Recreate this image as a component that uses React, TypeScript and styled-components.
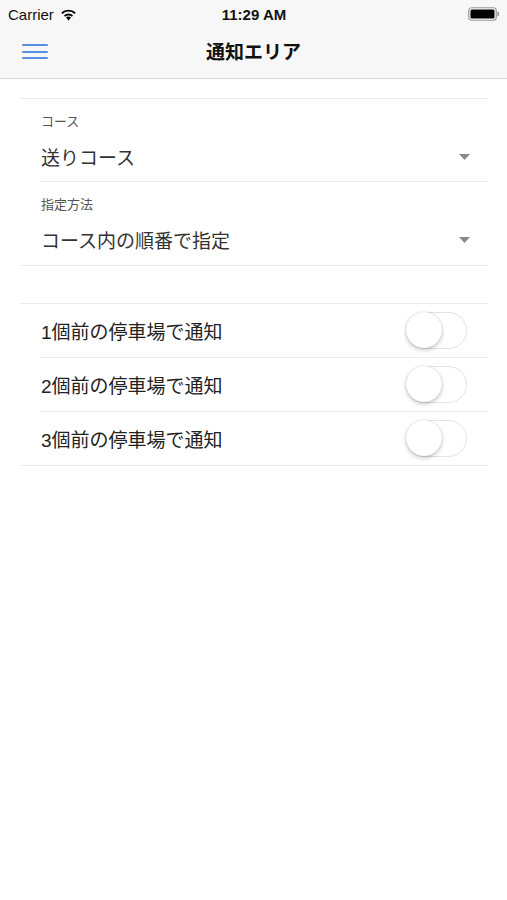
import styled, { createGlobalStyle } from "styled-components";

const GlobalStyle = createGlobalStyle`
  body {
    margin: 0;
    background: #ffffff;
    font-family: "Liberation Sans", "Noto Sans CJK JP", sans-serif;
    color: #222;
  }
`;

const fields = [
  { label: "コース", value: "送りコース" },
  { label: "指定方法", value: "コース内の順番で指定" },
];

const notices = ["1個前の停車場で通知", "2個前の停車場で通知", "3個前の停車場で通知"];

function WifiIcon() {
  return (
    <svg width="17" height="13" viewBox="0 0 17 13">
      <path d="M8.5 12.5 L6 9.6 A3.6 3.6 0 0 1 11 9.6 Z" fill="#000" />
      <path d="M3.9 7.4 A6.6 6.6 0 0 1 13.1 7.4 L11.8 8.8 A4.7 4.7 0 0 0 5.2 8.8 Z" fill="#000" />
      <path d="M1.2 4.6 A10.5 10.5 0 0 1 15.8 4.6 L14.4 6 A8.5 8.5 0 0 0 2.6 6 Z" fill="#000" />
    </svg>
  );
}

function Battery() {
  return (
    <svg width="32" height="14" viewBox="0 0 32 14">
      <rect x="0.75" y="0.75" width="27.5" height="12.5" rx="3" fill="none" stroke="#999" strokeWidth="1.2" />
      <rect x="2.5" y="2.5" width="24" height="9" rx="1.5" fill="#000" />
      <rect x="29.3" y="4.8" width="1.8" height="4.4" rx="0.9" fill="#999" />
    </svg>
  );
}

function Caret() {
  return (
    <svg width="11" height="6" viewBox="0 0 11 6">
      <path d="M0 0 L11 0 L5.5 6 Z" fill="#8a8a8a" />
    </svg>
  );
}

export default function App() {
  return (
    <Page>
      <GlobalStyle />
      <Header>
        <StatusBar>
          <Carrier>
            Carrier <WifiIcon />
          </Carrier>
          <Clock>11:29 AM</Clock>
          <BatteryBox>
            <Battery />
          </BatteryBox>
        </StatusBar>
        <NavBar>
          <MenuButton aria-label="menu">
            <span />
            <span />
            <span />
          </MenuButton>
          <Title>通知エリア</Title>
        </NavBar>
      </Header>
      <Content>
        <Section>
          {fields.map((f, i) => (
            <Field key={f.label} $last={i === fields.length - 1}>
              <FieldLabel>{f.label}</FieldLabel>
              <SelectRow>
                <FieldValue>{f.value}</FieldValue>
                <Caret />
              </SelectRow>
            </Field>
          ))}
        </Section>
        <Section>
          {notices.map((n, i) => (
            <ToggleRow key={n} $last={i === notices.length - 1}>
              <RowText>{n}</RowText>
              <Switch>
                <Knob />
              </Switch>
            </ToggleRow>
          ))}
        </Section>
      </Content>
    </Page>
  );
}

const Page = styled.div`
  width: 507px;
  min-height: 900px;
  background: #fff;
`;

const Header = styled.header`
  background: #f7f7f7;
  border-bottom: 1px solid #d6d6d6;
`;

const StatusBar = styled.div`
  height: 28px;
  display: grid;
  grid-template-columns: 1fr auto 1fr;
  align-items: center;
  padding: 0 7px 0 8px;
`;

const Carrier = styled.div`
  display: flex;
  align-items: center;
  gap: 6px;
  font-size: 15px;
  color: #111;
`;

const Clock = styled.div`
  font-size: 15px;
  font-weight: 700;
  color: #111;
`;

const BatteryBox = styled.div`
  display: flex;
  justify-content: flex-end;
`;

const NavBar = styled.div`
  height: 50px;
  display: flex;
  align-items: center;
  justify-content: center;
  position: relative;
`;

const MenuButton = styled.button`
  position: absolute;
  left: 22px;
  top: 16px;
  width: 26px;
  height: 15px;
  padding: 0;
  border: none;
  background: none;
  display: flex;
  flex-direction: column;
  justify-content: space-between;

  span {
    display: block;
    height: 2px;
    border-radius: 1px;
    background: #5a8fe6;
  }
`;

const Title = styled.h1`
  margin: 0 0 5px;
  font-size: 19px;
  font-weight: 700;
  color: #111;
  font-family: "Noto Sans CJK JP", sans-serif;
`;

const Content = styled.main`
  padding: 19px 19px 0 20px;
  display: flex;
  flex-direction: column;
  gap: 37px;
`;

const Section = styled.section`
  border-top: 1px solid #ececec;
  border-bottom: 1px solid #ececec;
`;

const Field = styled.div<{ $last: boolean }>`
  margin-left: 20px;
  padding: 14px 0 ${(p) => (p.$last ? "12px" : "11px")} 1px;
  border-bottom: ${(p) => (p.$last ? "none" : "1px solid #ececec")};
`;

const FieldLabel = styled.div`
  font-family: "Noto Sans CJK JP", sans-serif;
  font-size: 13px;
  line-height: 16px;
  color: #555;
`;

const SelectRow = styled.div`
  margin-top: 15px;
  display: flex;
  align-items: center;
  justify-content: space-between;
  padding-right: 18px;
`;

const FieldValue = styled.div`
  font-family: "Noto Sans CJK JP", sans-serif;
  font-size: 19px;
  line-height: 26px;
  color: #333;
`;

const ToggleRow = styled.div<{ $last: boolean }>`
  margin-left: 20px;
  height: 53px;
  padding: 0 21px 0 1px;
  display: flex;
  align-items: center;
  justify-content: space-between;
  border-bottom: ${(p) => (p.$last ? "none" : "1px solid #ececec")};
`;

const RowText = styled.div`
  font-family: "Liberation Sans", "Noto Sans CJK JP", sans-serif;
  font-size: 19px;
  color: #222;
`;

const Switch = styled.div`
  position: relative;
  width: 61px;
  height: 37px;
  box-sizing: border-box;
  border-radius: 19px;
  border: 1.5px solid #e3e3e3;
  background: #fff;
`;

const Knob = styled.div`
  position: absolute;
  left: -1px;
  top: -1px;
  width: 36px;
  height: 36px;
  border-radius: 50%;
  background: #fff;
  box-shadow: 0 2px 4px rgba(0, 0, 0, 0.22), 0 0 1px rgba(0, 0, 0, 0.25);
`;
